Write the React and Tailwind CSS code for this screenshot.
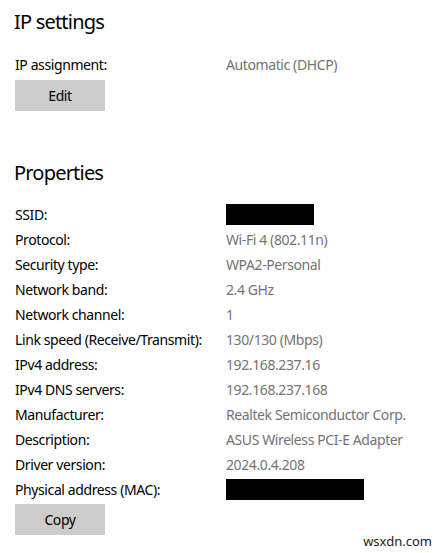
const font = { fontFamily: '"Noto Sans", "Open Sans", sans-serif' };

const PROPS = [
  ["SSID:", null, "w-[88px]"],
  ["Protocol:", "Wi-Fi 4 (802.11n)"],
  ["Security type:", "WPA2-Personal"],
  ["Network band:", "2.4 GHz"],
  ["Network channel:", "1"],
  ["Link speed (Receive/Transmit):", "130/130 (Mbps)"],
  ["IPv4 address:", "192.168.237.16"],
  ["IPv4 DNS servers:", "192.168.237.168"],
  ["Manufacturer:", "Realtek Semiconductor Corp."],
  ["Description:", "ASUS Wireless PCI-E Adapter"],
  ["Driver version:", "2024.0.4.208"],
  ["Physical address (MAC):", null, "w-[138px]"],
];

function Row({ label, value, redact }) {
  return (
    <div className="flex h-[25px] items-center text-[14px] tracking-[-0.4px]">
      <div className="w-[211px] shrink-0 text-black">{label}</div>
      {value !== null ? (
        <div className="text-[#737373]">{value}</div>
      ) : (
        <div className={`h-[21px] bg-black ${redact}`} />
      )}
    </div>
  );
}

function GrayButton({ children }) {
  return (
    <button className="h-[31px] w-[90px] bg-[#cccccc] text-[14px] tracking-[-0.4px] text-black">
      {children}
    </button>
  );
}

export default function App() {
  return (
    <div className="relative h-[553px] w-[443px] overflow-hidden bg-white px-[15px]" style={font}>
      <h2 className="-ml-[1px] pt-[8px] text-[20px] leading-[28px] tracking-[-0.8px] text-black">IP settings</h2>

      <div className="mt-[16px]">
        <Row label="IP assignment:" value="Automatic (DHCP)" />
      </div>
      <div className="mt-[3px]">
        <GrayButton>Edit</GrayButton>
      </div>

      <h2 className="-ml-[1px] mt-[48px] text-[20px] leading-[28px] tracking-[-0.8px] text-black">Properties</h2>

      <div className="mt-[15px]">
        {PROPS.map(([label, value, redact]) => (
          <Row key={label} label={label} value={value} redact={redact} />
        ))}
      </div>
      <div className="mt-[2px]">
        <GrayButton>Copy</GrayButton>
      </div>

      <div className="absolute bottom-[2px] right-[11px] text-[13px] text-[#222]">wsxdn.com</div>
    </div>
  );
}
